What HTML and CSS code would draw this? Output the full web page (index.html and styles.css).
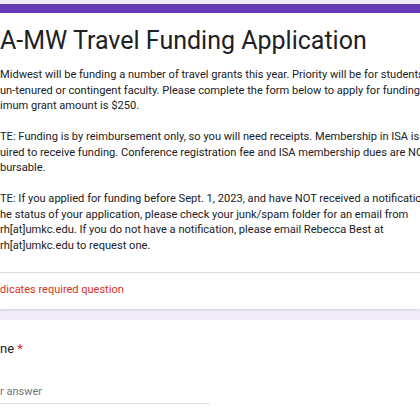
FILE: index.html
```html
<!DOCTYPE html>
<html lang="en">
<head>
  <meta charset="UTF-8">
  <title>ISA-MW Travel Funding Application</title>
  <link rel="stylesheet" href="styles.css">
</head>
<body>
  <div class="page">
    <div class="card head">
      <h1 class="title">A-MW Travel Funding Application</h1>
      <div class="desc">
        <p>Midwest will be funding a number of travel grants this year. Priority will be for students and<br>
        un-tenured or contingent faculty. Please complete the form below to apply for funding.<br>
        imum grant amount is $250.</p>
        <p>TE: Funding is by reimbursement only, so you will need receipts. Membership in ISA is<br>
        uired to receive funding. Conference registration fee and ISA membership dues are NOT<br>
        bursable.</p>
        <p>TE: If you applied for funding before Sept. 1, 2023, and have NOT received a notification<br>
        he status of your application, please check your junk/spam folder for an email from<br>
        rh[at]umkc.edu. If you do not have a notification, please email Rebecca Best at<br>
        rh[at]umkc.edu to request one.</p>
      </div>
      <div class="required">dicates required question</div>
    </div>
    <div class="card question">
      <div class="q-title">ne <span class="star">*</span></div>
      <div class="answer">r answer</div>
    </div>
  </div>
</body>
</html>
```

FILE: styles.css
```css
body {
  margin: 0;
  background: #f0ebf8;
  font-family: Roboto, "Liberation Sans", sans-serif;
  color: #202124;
  overflow: hidden;
}
.page {
  padding-top: 4px;
  width: 420px;
  height: 416px;
  overflow: hidden;
}
.card {
  background: #fff;
  box-shadow: 0 1px 2px rgba(0,0,0,0.12);
}
.head {
  border-top: 9px solid #673ab7;
}
.title {
  margin: 0;
  padding-top: 11px;
  font-family: Roboto, sans-serif;
  font-weight: 400;
  font-size: 25px;
  line-height: 34px;
  white-space: nowrap;
}
.desc {
  margin-top: 9px;
  padding-bottom: 19px;
  font-size: 11.1px;
  line-height: 15.5px;
  white-space: nowrap;
}
.desc p {
  margin: 0 0 15.5px;
}
.desc p:last-child {
  margin-bottom: 0;
}
.required {
  border-top: 1px solid #dadce0;
  color: #d93025;
  font-size: 11px;
  line-height: 16px;
  padding: 9px 0 11px;
}
.question {
  margin-top: 11px;
  padding-top: 20px;
  height: 120px;
}
.q-title {
  font-size: 13px;
  line-height: 18px;
}
.star {
  color: #d93025;
}
.answer {
  margin-top: 26px;
  width: 210px;
  font-size: 11px;
  line-height: 16px;
  color: #70757a;
  padding-bottom: 3px;
  border-bottom: 1px solid #e0e0e0;
}
```
